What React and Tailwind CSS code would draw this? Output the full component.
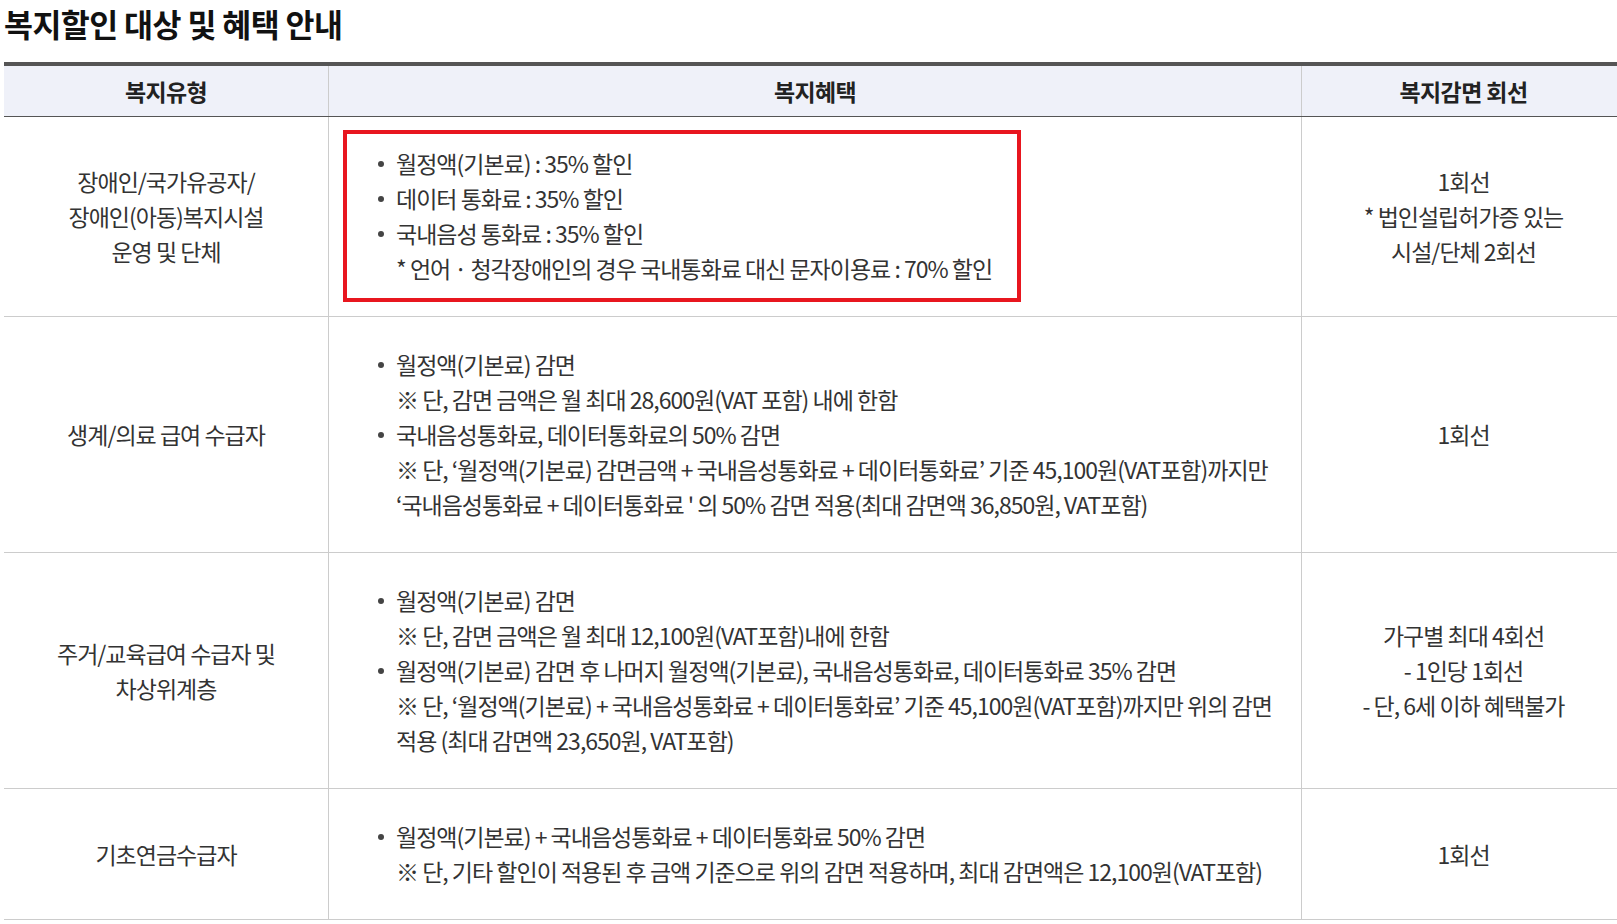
import React from "react";

const Bullet = ({ children }) => (
  <div className="relative whitespace-nowrap">
    <span className="absolute left-[-18px] top-[15px] w-[6px] h-[6px] rounded-full bg-[#444]" />
    {children}
  </div>
);

const Line = ({ children }) => <div className="whitespace-nowrap">{children}</div>;

const rows = [
  {
    type: ["장애인/국가유공자/", "장애인(아동)복지시설", "운영 및 단체"],
    lines: null,
    count: ["1회선", "* 법인설립허가증 있는", "시설/단체 2회선"],
  },
  {
    type: ["생계/의료 급여 수급자"],
    lines: [
      ["b", "월정액(기본료) 감면"],
      ["l", "※ 단, 감면 금액은 월 최대 28,600원(VAT 포함) 내에 한함"],
      ["b", "국내음성통화료, 데이터통화료의 50% 감면"],
      ["l", "※ 단, ‘월정액(기본료) 감면금액 + 국내음성통화료 + 데이터통화료’ 기준 45,100원(VAT포함)까지만"],
      ["l", "‘국내음성통화료 + 데이터통화료 ' 의 50% 감면 적용(최대 감면액 36,850원, VAT포함)"],
    ],
    count: ["1회선"],
  },
  {
    type: ["주거/교육급여 수급자 및", "차상위계층"],
    lines: [
      ["b", "월정액(기본료) 감면"],
      ["l", "※ 단, 감면 금액은 월 최대 12,100원(VAT포함)내에 한함"],
      ["b", "월정액(기본료) 감면 후 나머지 월정액(기본료), 국내음성통화료, 데이터통화료 35% 감면"],
      ["l", "※ 단, ‘월정액(기본료) + 국내음성통화료 + 데이터통화료’ 기준 45,100원(VAT포함)까지만 위의 감면"],
      ["l", "적용 (최대 감면액 23,650원, VAT포함)"],
    ],
    count: ["가구별 최대 4회선", "- 1인당 1회선", "- 단, 6세 이하 혜택불가"],
  },
  {
    type: ["기초연금수급자"],
    lines: [
      ["b", "월정액(기본료) + 국내음성통화료 + 데이터통화료 50% 감면"],
      ["l", "※ 단, 기타 할인이 적용된 후 금액 기준으로 위의 감면 적용하며, 최대 감면액은 12,100원(VAT포함)"],
    ],
    count: ["1회선"],
  },
];

export default function App() {
  return (
    <div
      className="w-[1617px] h-[924px] bg-white overflow-hidden pl-[4px] text-[#333]"
      style={{ fontFamily: '"Noto Sans CJK KR", "Noto Sans", sans-serif' }}
    >
      <h1 className="text-[31.5px] leading-[40px] font-bold text-[#111] pt-[3px] tracking-[-0.6px]">
        복지할인 대상 및 혜택 안내
      </h1>
      <div className="mt-[19px] border-t-[4px] border-[#555]">
        <div className="grid grid-cols-[325px_973px_1fr] bg-[#eff1f9] border-b border-[#555] h-[51px] text-[23px] font-bold text-[#222] tracking-[-0.6px]">
          <div className="flex items-center justify-center border-r border-[#ccc]">복지유형</div>
          <div className="flex items-center justify-center border-r border-[#ccc]">복지혜택</div>
          <div className="flex items-center justify-center pl-[8px]">복지감면 회선</div>
        </div>
        {rows.map((r, i) => (
          <div
            key={i}
            className="grid grid-cols-[325px_973px_1fr] border-b border-[#ccc] text-[23px] leading-[35px] tracking-[-1px]"
          >
            <div className="flex flex-col items-center justify-center text-center border-r border-[#ccc]">
              {r.type.map((t, j) => (
                <div key={j}>{t}</div>
              ))}
            </div>
            <div className="border-r border-[#ccc]">
              {r.lines ? (
                <div className="py-[30px] pl-[67px]">
                  {r.lines.map(([k, t], j) =>
                    k === "b" ? <Bullet key={j}>{t}</Bullet> : <Line key={j}>{t}</Line>
                  )}
                </div>
              ) : (
                <div className="pt-[13px] pb-[14px] pl-[14px]">
                  <div className="inline-block border-[4px] border-[#e8161f] pl-[49px] pr-[25px] py-[12px]">
                    <Bullet>월정액(기본료) : 35% 할인</Bullet>
                    <Bullet>데이터 통화료 : 35% 할인</Bullet>
                    <Bullet>국내음성 통화료 : 35% 할인</Bullet>
                    <Line>* 언어 · 청각장애인의 경우 국내통화료 대신 문자이용료 : 70% 할인</Line>
                  </div>
                </div>
              )}
            </div>
            <div className="flex flex-col items-center justify-center text-center pl-[8px]">
              {r.count.map((t, j) => (
                <div key={j}>{t}</div>
              ))}
            </div>
          </div>
        ))}
      </div>
    </div>
  );
}
